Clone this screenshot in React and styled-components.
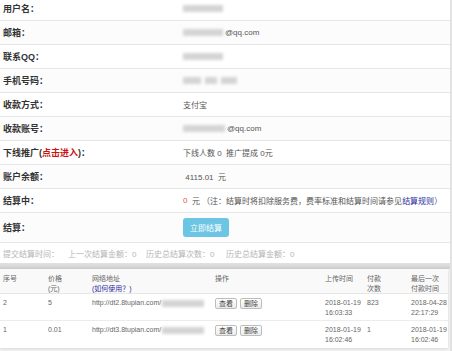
import React from "react";
import styled, { createGlobalStyle } from "styled-components";

// ---- Data ----

const rows = [
	{ label: "用户名：", blur: [40] },
	{ label: "邮箱：", blur: [40], tail: "@qq.com", alt: true },
	{ label: "联系QQ：", blur: [40] },
	{ label: "手机号码：", blur: [18, 12, 16], alt: true },
	{ label: "收款方式：", text: "支付宝" },
	{ label: "收款账号：", blur: [42], tail: "@qq.com", alt: true },
];

const records = [
	{ id: "2", price: "5", url: "http://dt2.8tupian.com/", date: "2018-01-19", time: "16:03:33", count: "823", lastDate: "2018-04-28", lastTime: "22:17:29" },
	{ id: "1", price: "0.01", url: "http://dt3.8tupian.com/", date: "2018-01-19", time: "16:02:46", count: "1", lastDate: "2018-01-19", lastTime: "16:02:46" },
];

// ---- Component ----

const App = () => {
	return (
		<>
			<GlobalStyle />
			<Page>
				<Form>
					{rows.map((r) => (
						<Row key={r.label} alt={r.alt}>
							<Label>{r.label}</Label>
							<Value>
								{r.blur && (
									<BlurGroup>
										{r.blur.map((w, i) => (
											<Blur key={i} style={{ width: w }} />
										))}
									</BlurGroup>
								)}
								{r.tail}
								{r.text}
							</Value>
						</Row>
					))}
					<Row>
						<Label>
							下线推广(<Red>点击进入</Red>)：
						</Label>
						<Value>下线人数 0&nbsp; 推广提成 0元</Value>
					</Row>
					<Row alt>
						<Label>账户余额：</Label>
						<Value>&nbsp;4115.01&nbsp; 元</Value>
					</Row>
					<Row>
						<Label>结算中：</Label>
						<Value>
							<Zero>0</Zero>&nbsp; 元 （注：结算时将扣除服务费，费率标准和结算时间请参见
							<Rule>结算规则</Rule>）
						</Value>
					</Row>
					<Row tall alt>
						<Label>结算：</Label>
						<Value>
							<SettleBtn>立即结算</SettleBtn>
						</Value>
					</Row>
					<Stats>
						<span>提交结算时间：</span>
						<span>上一次结算金额：0</span>
						<span>历史总结算次数：0</span>
						<span>历史总结算金额：0</span>
					</Stats>
				</Form>
				<Band />
				<Card>
					<Head>
						<Cell>序号</Cell>
						<Cell>
							价格
							<br />
							(元)
						</Cell>
						<Cell>
							网络地址
							<br />
							<HowTo>(如何使用？)</HowTo>
						</Cell>
						<Cell>操作</Cell>
						<Cell>上传时间</Cell>
						<Cell>
							付款
							<br />
							次数
						</Cell>
						<Cell>
							最后一次
							<br />
							付款时间
						</Cell>
					</Head>
					{records.map((r) => (
						<Record key={r.id}>
							<Cell>{r.id}</Cell>
							<Cell>{r.price}</Cell>
							<Cell>
								<Url>
									{r.url}
									<Blur style={{ width: 42 }} />
								</Url>
							</Cell>
							<Cell>
								<Actions>
									<SmallBtn>查看</SmallBtn>
									<SmallBtn>删除</SmallBtn>
								</Actions>
							</Cell>
							<Cell>
								{r.date}
								<br />
								{r.time}
							</Cell>
							<Cell>{r.count}</Cell>
							<Cell>
								{r.lastDate}
								<br />
								{r.lastTime}
							</Cell>
						</Record>
					))}
				</Card>
			</Page>
		</>
	);
};

export default App;

// ---- Style ----

const GlobalStyle = createGlobalStyle`
	body {
		margin: 0;
		background: #fff;
		font-family: "Liberation Sans", "Noto Sans CJK SC", sans-serif;
	}
`;

const Page = styled.div`
	width: 452px;
	height: 351px;
	overflow: hidden;
	box-sizing: border-box;
	border-right: 2px solid #e2e2e2;
	background: #f4f4f4;
`;

const Form = styled.div`
	margin-top: -3px;
	background: #fff;
`;

const Row = styled.div`
	display: grid;
	grid-template-columns: 180px 1fr;
	align-items: center;
	height: ${({ tall }) => (tall ? "30px" : "24px")};
	box-sizing: border-box;
	padding-left: 3px;
	border-bottom: 1px solid #e6e6e6;
	background: ${({ alt }) => (alt ? "#fcfcfc" : "#fff")};
`;

const Label = styled.div`
	font-size: 9px;
	font-weight: bold;
	color: #333;
	white-space: nowrap;
`;

const Red = styled.span`
	color: #cc1111;
`;

const Value = styled.div`
	display: flex;
	align-items: center;
	font-size: 8px;
	color: #555;
	white-space: nowrap;
`;

const BlurGroup = styled.span`
	display: inline-flex;
	gap: 4px;
	margin-right: 2px;
`;

const Blur = styled.span`
	display: inline-block;
	height: 7px;
	background: #d4d4d4;
	filter: blur(1.5px);
`;

const Zero = styled.span`
	color: #d9534f;
`;

const Rule = styled.span`
	color: #2b2b9e;
`;

const SettleBtn = styled.div`
	width: 46px;
	height: 19px;
	border-radius: 3px;
	background: #6cc5e3;
	color: #fff;
	font-size: 8px;
	display: flex;
	align-items: center;
	justify-content: center;
`;

const Stats = styled.div`
	display: grid;
	grid-template-columns: 65px 78px 80px 1fr;
	align-items: center;
	height: 20px;
	padding-left: 3px;
	font-size: 8px;
	color: #b5b5b5;
	white-space: nowrap;
	background: #fff;
`;

const Band = styled.div`
	height: 6px;
	background: linear-gradient(#e2e2e2, #cfcfcf);
`;

const Card = styled.div`
	background: #fff;
	box-shadow: 0 1px 3px rgba(0, 0, 0, 0.12);
	margin-right: 2px;
`;

const Grid = styled.div`
	display: grid;
	grid-template-columns: 45px 44px 123px 110px 42px 44px 1fr;
	padding-left: 3px;
	font-size: 7px;
	line-height: 10px;
	color: #666;
	white-space: nowrap;
`;

const Head = styled(Grid)`
	padding-top: 5px;
	height: 25px;
	box-sizing: border-box;
	background: #f9f9f9;
	border-bottom: 1px solid #e6e6e6;
`;

const Record = styled(Grid)`
	padding-top: 4px;
	height: 27px;
	box-sizing: border-box;
	border-bottom: 1px solid #ececec;

	&:last-child {
		border-bottom: none;
	}
`;

const Cell = styled.div``;

const HowTo = styled.span`
	color: #2b2b9e;
`;

const Url = styled.div`
	display: flex;
	align-items: center;
	gap: 1px;
`;

const Actions = styled.div`
	display: flex;
	gap: 3px;
`;

const SmallBtn = styled.div`
	font-size: 7px;
	line-height: 9px;
	padding: 0 3px;
	border: 1px solid #bdbdbd;
	border-radius: 2px;
	background: linear-gradient(#fff, #ececec);
	color: #444;
`;
